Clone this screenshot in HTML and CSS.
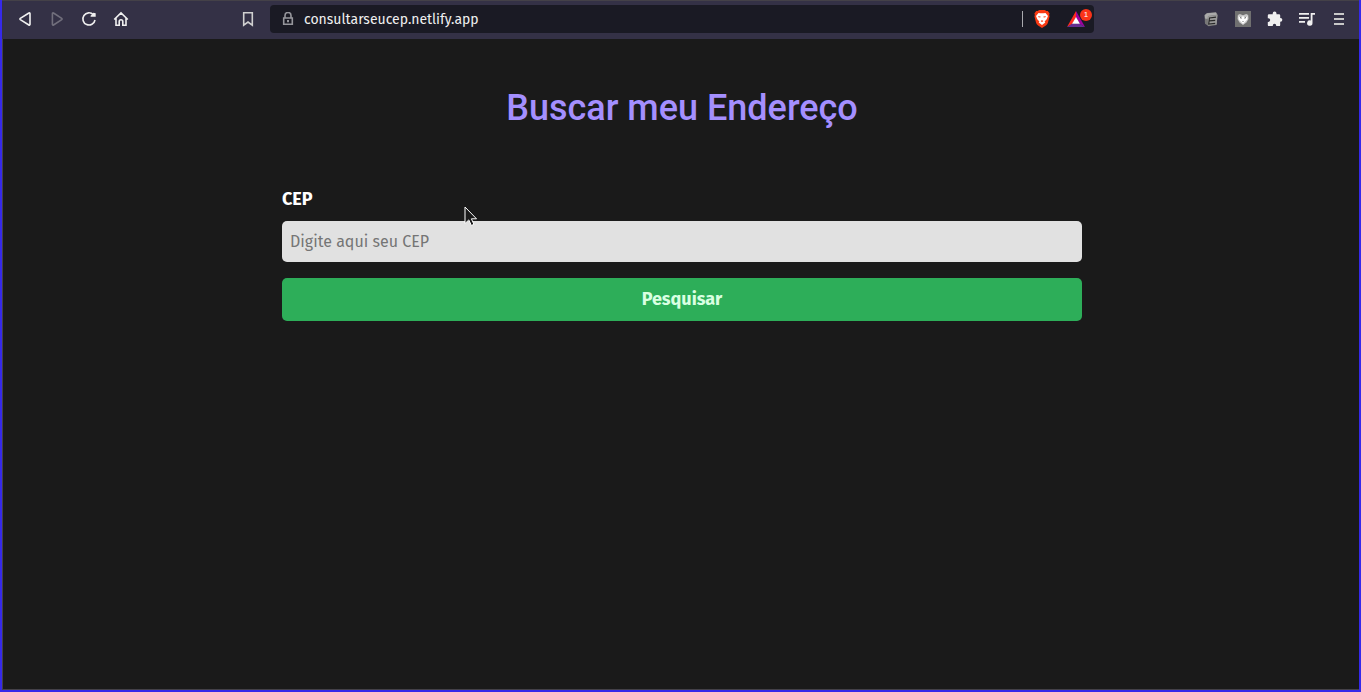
FILE: index.html
```html
<!DOCTYPE html>
<html lang="pt-BR">
<head>
<meta charset="utf-8">
<meta name="viewport" content="width=device-width, initial-scale=1">
<title>Buscar meu Endereço</title>
<link rel="stylesheet" href="styles.css">
</head>
<body>
<div class="browser">
  <header class="toolbar">
    <nav class="nav-tools" aria-label="Navegação">
      <button class="tool" type="button" aria-label="Voltar"><svg viewBox="0 0 16 16"><path class="line" d="M13 2.6v10.8a.7.7 0 0 1-1.1.6L3.3 8.7a.8.8 0 0 1 0-1.3L11.9 2a.7.7 0 0 1 1.1.6Z"/></svg></button>
      <button class="tool tool-dim" type="button" aria-label="Avançar"><svg viewBox="0 0 16 16"><path class="line" d="M3.4 2.6v10.8a.7.7 0 0 0 1.1.6l8.2-5.3a.8.8 0 0 0 0-1.3L4.5 2a.7.7 0 0 0-1.1.6Z"/></svg></button>
      <button class="tool" type="button" aria-label="Recarregar"><svg viewBox="0 0 16 16"><path class="line" d="M14 9A6.100 6.100 0 1 1 12.400 3.700"/><path d="M9.600 5.800v-1L12.400 1.800l2.300.4v3.600Z"/></svg></button>
      <button class="tool" type="button" aria-label="Início"><svg viewBox="0 0 16 16"><path class="line" d="M1.200 8.500 8 1.900l6.800 6.600M3 7v7.200h3.200v-3.600a1.800 1.800 0 0 1 3.600 0v3.600H13V7"/></svg></button>
      <button class="tool tool-bookmark" type="button" aria-label="Favoritar"><svg viewBox="0 0 16 16"><path class="line" d="M3.700 1.800h8.600v12.400L8 11l-4.300 3.200Z"/></svg></button>
    </nav>

    <div class="address">
      <svg class="lock" viewBox="0 0 14 14" aria-hidden="true"><path class="line" d="M4 6V3.500a3 3 0 0 1 6 0V6"/><path class="line" d="M2.700 6h8.600v6.200H2.700Z"/><path d="M6 8h2v2.200H6Z"/></svg>
      <input class="url" type="text" aria-label="Endereço do site" value="consultarseucep.netlify.app">
      <span class="separator"></span>
      <button class="tool tool-shield" type="button" aria-label="Brave Shields"><svg viewBox="0 0 16 18"><path fill="#f93a13" d="m3.700 1 1.500-.9h5.600l1.500.9 1.500.1 1.800 2.300-.5 1.500.5 1.300-1.700 6.600c-.3 1.100-1 1.900-2 2.600L8 17.900l-3.900-2.500c-1-.7-1.700-1.500-2-2.600L.4 6.200l.5-1.300-.5-1.500 1.800-2.300Z"/><path fill="#fff" d="m4.500 2.900 2 .4h3l2-.4 2.500 3-1.300 3.300-2.100 2.200.7 1.100L8 14.900l-3.300-2.400.7-1.100-2.100-2.200L2 5.900Z"/><path fill="#f93a13" d="m4 6.200 2.600.3-.3 1-1.700-.2Zm8 0-2.600.3.3 1 1.700-.2ZM7 10.600h2l.2.600-1.200.7-1.200-.7Z"/></svg></button>
      <button class="tool tool-rewards" type="button" aria-label="Brave Rewards"><svg viewBox="0 0 18 16"><path fill="#ff2a1c" d="M9 0 0 16l5.500-3.300L9 6.200Z"/><path fill="#a0009e" d="m9 0 9 16-5.500-3.300L9 6.200Z"/><path fill="#662d91" d="M0 16h18l-5.500-3.500h-7Z"/><path fill="#fff" d="m9 6 3.900 6.700H5.100Z"/></svg><span class="badge">1</span></button>
    </div>

    <div class="extensions">
      <button class="tool" type="button" aria-label="Anotações"><svg viewBox="0 0 16 16"><path fill="#777" d="M1.500 4 4 2.100l9-.8 1.600 2.200-1 10.500-8 1.200L2 12.700Z"/><path fill="#aaa" d="M1.700 4.200 4 2.300l9-.8 1 2.300-9 1.100-.5 3-2.500-.3Z"/><path fill="#999" d="m5 5.200 9.500-1.200-.9 9.600-8.700 1Z"/><path fill="none" stroke="#292929" stroke-width="1.200" d="m13 6.200-6.500.8-.8 6 6.500-.7M6.200 9.900l6-.6"/></svg></button>
      <button class="tool" type="button" aria-label="Extensão"><svg viewBox="0 0 16 16"><path fill="#707070" d="M0 0h16v16H0z"/><path fill="#c8c8c8" d="m2.800 4 2-1L8 4.200 11.200 3l2 1 .3 4-2 3.600L8 14l-3.500-2.400-2-3.600Z"/><path fill="#fff" d="m3.500 5 2.400 2L8 5l2.100 2 2.400-2-.2 3.500L8 13 3.700 8.500Z"/><path fill="#555" d="m4.700 5.500 2 1.500-.7.900Zm6.600 0-2 1.500.7.900ZM7.200 9.900h1.600L8 11Z"/></svg></button>
      <button class="tool" type="button" aria-label="Extensões"><svg viewBox="0 0 16 16"><path d="M2 3.300h3.700V2.500a1.900 1.900 0 0 1 3.800 0v.8H12a1.200 1.200 0 0 1 1.200 1.200V7h.3a1.800 1.800 0 0 1 0 3.700h-.3v3.200a1.200 1.200 0 0 1-1.200 1.200H9.200v-.7a1.700 1.700 0 0 0-3.400 0v.7H2a1.200 1.200 0 0 1-1.200-1.200v-3h.6a1.800 1.800 0 0 0 0-3.600H.8V4.500A1.200 1.200 0 0 1 2 3.300Z"/></svg></button>
      <button class="tool" type="button" aria-label="Lista de mídia"><svg viewBox="0 0 16 16"><path d="M0 2h10v1.800H0Zm0 4h10v1.800H0Zm0 4h6v1.800H0ZM11.700 2H16v1.800h-2.500v8.200a2.700 2.700 0 1 1-1.800-2.500Z"/></svg></button>
      <button class="tool tool-menu" type="button" aria-label="Menu"><svg viewBox="0 0 16 16"><path d="M3 2h10v2H3Zm0 5h10v2H3Zm0 5h10v2H3Z"/></svg></button>
    </div>
  </header>

  <main class="page">
    <h1 class="title">Buscar meu Endereço</h1>
    <form class="search">
      <label class="label" for="cep">CEP</label>
      <input class="field" id="cep" type="text" placeholder="Digite aqui seu CEP">
      <button class="submit" type="button">Pesquisar</button>
    </form>
  </main>
</div>
<svg class="cursor" viewBox="0 0 14 21" aria-hidden="true"><path d="M1 1v16.500l3.800-3.600 2.600 5.600 2.500-1.200-2.500-5.500h5.100Z"/></svg>
</body>
</html>
```
FILE: styles.css
```css
* {
  box-sizing: border-box;
}

body {
  margin: 0;
  background: #1a1a1a;
  font-family: "Fira Sans", "Noto Sans", sans-serif;
}

.browser {
  display: flex;
  flex-direction: column;
  min-height: 100vh;
  border: 2px solid #3629ea;
  border-top: 0;
  box-shadow: inset 1px -1px #444148;
}

.toolbar {
  display: grid;
  grid-template-columns: 1fr minmax(0, 824px) 1fr;
  align-items: center;
  height: 39px;
  padding: 0 8px 2px 11px;
  border-top: 1px solid #444148;
  background: #343146;
  color: #f0f0f0;
}

.nav-tools,
.extensions {
  display: flex;
  align-items: center;
  gap: 16px;
}

.nav-tools {
  padding: 0 14px 0 4px;
}

.extensions {
  justify-content: flex-end;
  padding-right: 4px;
}

.tool {
  position: relative;
  display: block;
  flex: none;
  width: 16px;
  height: 16px;
  padding: 0;
  border: 0;
  background: none;
  color: inherit;
}

.tool svg {
  display: block;
  width: 100%;
  height: 100%;
  fill: currentColor;
}

.tool .line,
.lock .line {
  fill: none;
  stroke: currentColor;
  stroke-width: 1.6;
}

.tool-dim {
  color: #716f7c;
}

.tool-bookmark {
  margin-left: auto;
  color: #d0d0d0;
}

.tool-menu {
  color: #c8c8c8;
}

.address {
  display: flex;
  align-items: center;
  height: 28px;
  padding: 0 9px 0 11px;
  border-radius: 4px;
  background: #1a1a24;
}

.lock {
  flex: none;
  width: 14px;
  height: 14px;
  margin-right: 9px;
  color: #96969c;
  fill: currentColor;
}

.url {
  flex: 1;
  min-width: 0;
  padding: 2px 0 0;
  border: 0;
  outline: 0;
  background: none;
  color: #f0f0f0;
  font: 14px/20px "Fira Sans", "Noto Sans", sans-serif;
}

.separator {
  width: 1px;
  height: 16px;
  margin-right: 11px;
  background: #a9a9ae;
}

.tool-shield {
  height: 18px;
  margin-right: 17px;
}

.tool-rewards {
  width: 18px;
}

.badge {
  position: absolute;
  top: -2px;
  right: -7px;
  width: 12px;
  height: 12px;
  border-radius: 6px;
  background: #fa3319;
  color: #fff;
  font-size: 8px;
  line-height: 12px;
  text-align: center;
}

.page {
  flex: 1;
  width: 100%;
  max-width: 835px;
  margin: 0 auto;
  padding: 45px 16px 45px 19px;
}

.title {
  margin: 0 0 55px;
  color: #a48fff;
  font: 500 36px/48px Roboto, sans-serif;
  text-align: center;
}

.search {
  display: flex;
  flex-direction: column;
}

.label {
  margin-bottom: 10px;
  color: #fff;
  font-size: 18px;
  font-weight: 700;
  line-height: 24px;
}

.field {
  height: 41px;
  margin-bottom: 16px;
  padding: 0 8px;
  border: 0;
  border-radius: 5px;
  background: #e1e1e1;
  color: #1a1a1a;
  font: 16px/24px "Fira Sans", "Noto Sans", sans-serif;
}

.field::placeholder {
  color: #757575;
}

.submit {
  height: 43px;
  padding: 0 16px 2px;
  border: 0;
  border-radius: 5px;
  background: #2dae59;
  color: #d9ffe2;
  font: 700 18px/24px "Fira Sans", "Noto Sans", sans-serif;
}

.cursor {
  position: absolute;
  top: 206px;
  left: 464px;
  width: 14px;
  height: 21px;
  fill: #1a1a1a;
  stroke: #fff;
  stroke-width: 1;
  pointer-events: none;
}
```
